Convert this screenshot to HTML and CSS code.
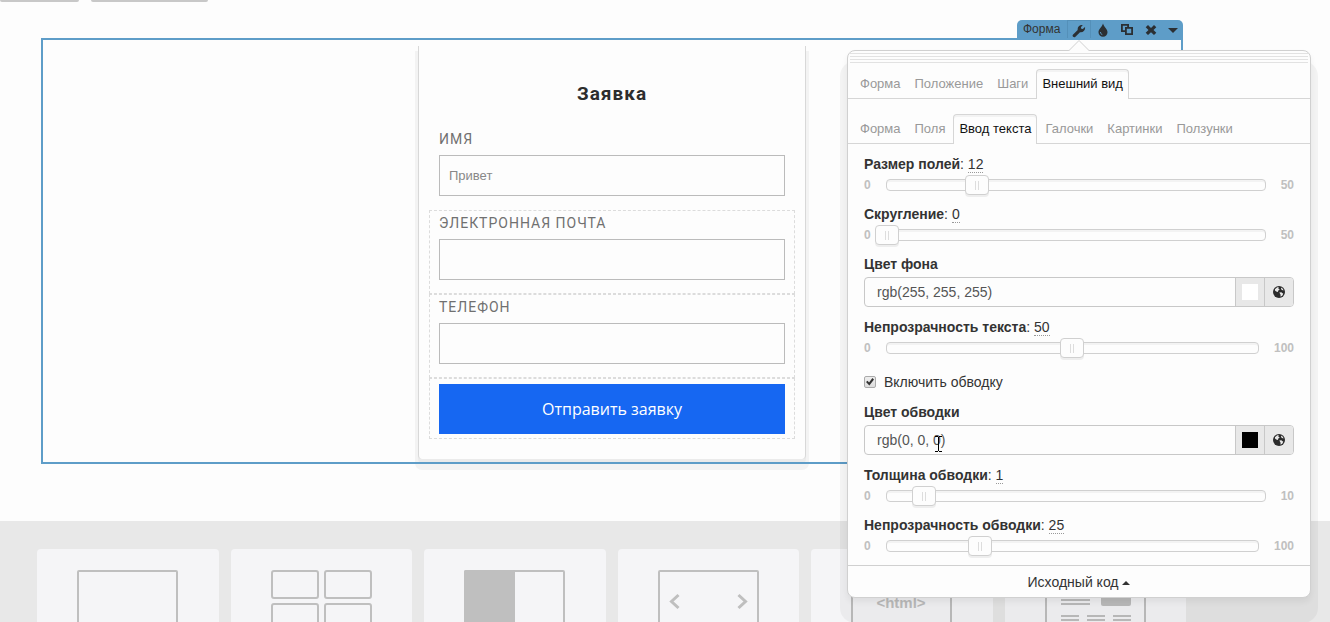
FILE: index.html
```html
<!DOCTYPE html>
<html lang="ru">
<head>
    <meta charset="UTF-8">
    <meta name="viewport" content="width=device-width, initial-scale=1.0">
    <title>Редактор формы</title>

    <link rel="stylesheet" href="styles.css">
</head>
<body>

    <div class="top-tabs">
        <div class="top-tab"></div>
        <div class="top-tab top-tab-wide"></div>
    </div>

    <!-- Edited block -->
    <main class="stage">
        <div class="toolbar">
            <span class="toolbar-title">Форма</span>
            <button type="button" class="tool active" aria-label="Настройки">
                <svg width="14" height="14" viewBox="0 0 14 14"><path d="M.9 10.800 5.700 6C5.200 3 7.500.5 10.800 1L8.900 3.200 9.300 4.700 10.800 5.100 13 3.100C13.600 6.200 11 8.800 8 8.200L3.200 13C1.900 14.200-.3 12 .9 10.800z"/></svg>
            </button>
            <button type="button" class="tool" aria-label="Цвет">
                <svg width="14" height="14" viewBox="0 0 14 14"><path d="M7 0.500C8 4 11.500 6 11.500 9.200A4.500 4.500 0 0 1 2.500 9.200C2.500 6 6 4 7 0.500z"/><path class="tool-gloss" d="M4.500 9c0 1.500.7 2.200 1.800 2.600"/></svg>
            </button>
            <button type="button" class="tool" aria-label="Копировать">
                <svg width="14" height="14" viewBox="0 0 14 14"><path fill-rule="evenodd" d="M1 1h8v3h4v8H5V9H1zM2.800 2.800v4.400H5V4h2.200V2.800zM6.800 5.800v4.400h4.400V5.800z"/></svg>
            </button>
            <button type="button" class="tool" aria-label="Удалить">
                <svg width="14" height="14" viewBox="0 0 14 14"><path d="M4 2 7 5 10 2 12.300 4.300 9.500 7 12.300 9.700 10 12 7 9.200 4 12 1.700 9.700 4.500 7 1.700 4.300z"/></svg>
            </button>
            <button type="button" class="tool tool-last" aria-label="Ещё">
                <svg width="10" height="14" viewBox="0 0 10 14"><path d="M0 5h10L5 10z"/></svg>
            </button>
        </div>

        <div class="frame">
            <form class="order">
                <h1>Заявка</h1>
                <div class="cell cell-plain">
                    <label for="name">ИМЯ</label>
                    <input type="text" id="name" placeholder="Привет">
                </div>
                <div class="cell">
                    <label for="email">ЭЛЕКТРОННАЯ ПОЧТА</label>
                    <input type="text" id="email">
                </div>
                <div class="cell">
                    <label for="phone">ТЕЛЕФОН</label>
                    <input type="text" id="phone">
                </div>
                <div class="cell cell-submit">
                    <button type="button">Отправить заявку</button>
                </div>
            </form>
        </div>
    </main>

    <!-- Widget library -->
    <section class="library">
        <button type="button" class="widget" aria-label="Блок">
            <svg width="101" height="80" viewBox="0 0 101 80"><rect x="1" y="1" width="99" height="78" rx="1"/></svg>
        </button>
        <button type="button" class="widget" aria-label="Сетка">
            <svg width="101" height="80" viewBox="0 0 101 80"><rect x="1" y="1" width="46" height="27" rx="2"/><rect x="54" y="1" width="46" height="27" rx="2"/><rect x="1" y="34" width="46" height="27" rx="2"/><rect x="54" y="34" width="46" height="27" rx="2"/></svg>
        </button>
        <button type="button" class="widget" aria-label="Колонки">
            <svg width="101" height="80" viewBox="0 0 101 80"><rect x="1" y="1" width="99" height="78" rx="1"/><rect class="solid" x="0" y="0" width="51" height="80" rx="2"/></svg>
        </button>
        <button type="button" class="widget" aria-label="Слайдер">
            <svg width="101" height="80" viewBox="0 0 101 80"><rect x="1" y="1" width="99" height="78" rx="1"/><path class="arrow" d="M20.500 25 13.500 31.500 20.500 38M80.500 25 87.500 31.500 80.500 38"/></svg>
        </button>
        <button type="button" class="widget" aria-label="HTML">
            <svg width="101" height="80" viewBox="0 0 101 80"><rect x="1" y="1" width="99" height="78" rx="1"/><text x="50" y="38" text-anchor="middle">&lt;html&gt;</text></svg>
        </button>
        <button type="button" class="widget" aria-label="Статья">
            <svg width="101" height="80" viewBox="0 0 101 80"><rect x="1" y="1" width="99" height="78" rx="1"/><path d="M16 30h29M16 34h29M16 46h18M42 46h18M68 46h18M16 50h18M42 50h18M68 50h18"/><rect class="solid" x="56" y="16" width="30" height="20" rx="2"/></svg>
        </button>
    </section>

    <!-- Settings popover -->
    <aside class="panel">
        <svg class="panel-arrow" width="22" height="11" viewBox="0 0 22 11"><path d="M0.500 11 11 0.500 21.500 11"/></svg>
        <div class="grip"></div>

        <nav class="tabs">
            <a href="#">Форма</a>
            <a href="#">Положение</a>
            <a href="#">Шаги</a>
            <a href="#" class="active">Внешний вид</a>
        </nav>
        <nav class="tabs">
            <a href="#">Форма</a>
            <a href="#">Поля</a>
            <a href="#" class="active">Ввод текста</a>
            <a href="#">Галочки</a>
            <a href="#">Картинки</a>
            <a href="#">Ползунки</a>
        </nav>

        <div class="settings">
            <div class="setting">
                <label for="size"><b>Размер полей</b>: <span class="value">12</span></label>
                <div class="slider">
                    <span>0</span>
                    <div class="track"><input type="range" id="size" min="0" max="50" value="12"></div>
                    <span>50</span>
                </div>
            </div>

            <div class="setting">
                <label for="radius"><b>Скругление</b>: <span class="value">0</span></label>
                <div class="slider">
                    <span>0</span>
                    <div class="track"><input type="range" id="radius" min="0" max="50" value="0"></div>
                    <span>50</span>
                </div>
            </div>

            <div class="setting">
                <label for="bg"><b>Цвет фона</b></label>
                <div class="color">
                    <input type="text" id="bg" value="rgb(255, 255, 255)">
                    <button type="button" aria-label="Выбрать цвет"><span class="swatch"></span></button>
                    <button type="button" aria-label="Общий цвет">
                        <svg width="12" height="12" viewBox="0 0 12 12"><circle cx="6" cy="6" r="6"/><path class="land" d="M2 3.200 4.200 1.300 6 1.400 5.300 2.800 6.800 3.600 5.300 4.600 4.900 6 3.200 5.500 2 4.500zM6.300 6.600 8.300 6.300 10.300 7.700 9.400 9.600 7.600 10.700 7.500 8.600zM8.300 1.600 10 3 10.500 4.500 9 4 8 3z"/></svg>
                    </button>
                </div>
            </div>

            <div class="setting">
                <label for="text-opacity"><b>Непрозрачность текста</b>: <span class="value">50</span></label>
                <div class="slider">
                    <span>0</span>
                    <div class="track"><input type="range" id="text-opacity" min="0" max="100" value="50"></div>
                    <span>100</span>
                </div>
            </div>

            <div class="check">
                <input type="checkbox" id="stroke" checked>
                <label for="stroke">Включить обводку</label>
            </div>

            <div class="setting">
                <label for="stroke-color"><b>Цвет обводки</b></label>
                <div class="color">
                    <input type="text" id="stroke-color" value="rgb(0, 0, 0)">
                    <button type="button" aria-label="Выбрать цвет"><span class="swatch swatch-black"></span></button>
                    <button type="button" aria-label="Общий цвет">
                        <svg width="12" height="12" viewBox="0 0 12 12"><circle cx="6" cy="6" r="6"/><path class="land" d="M2 3.200 4.200 1.300 6 1.400 5.300 2.800 6.800 3.600 5.300 4.600 4.900 6 3.200 5.500 2 4.500zM6.300 6.600 8.300 6.300 10.300 7.700 9.400 9.600 7.600 10.700 7.500 8.600zM8.300 1.600 10 3 10.500 4.500 9 4 8 3z"/></svg>
                    </button>
                    <svg class="cursor" width="7" height="16" viewBox="0 0 7 16"><path d="M0 .5h3M4 .5h3M3.500 1v14M0 15.500h3M4 15.500h3"/></svg>
                </div>
            </div>

            <div class="setting">
                <label for="stroke-width"><b>Толщина обводки</b>: <span class="value">1</span></label>
                <div class="slider">
                    <span>0</span>
                    <div class="track"><input type="range" id="stroke-width" min="0" max="10" value="1"></div>
                    <span>10</span>
                </div>
            </div>

            <div class="setting">
                <label for="stroke-opacity"><b>Непрозрачность обводки</b>: <span class="value">25</span></label>
                <div class="slider">
                    <span>0</span>
                    <div class="track"><input type="range" id="stroke-opacity" min="0" max="100" value="25"></div>
                    <span>100</span>
                </div>
            </div>
        </div>

        <button type="button" class="source">Исходный код <svg width="8" height="4" viewBox="0 0 8 4"><path d="M0 4h8L4 0z"/></svg></button>
    </aside>

</body>
</html>
```

FILE: styles.css
```css
* {
    box-sizing: border-box;
}

body {
    display: flex;
    flex-direction: column;
    position: relative;
    height: 100vh;
    margin: 0;
    overflow: hidden;
    background-color: #fdfdfd;
    color: #333;
    font-family: "Liberation Sans", Arial, sans-serif;
    font-size: 14px;
    line-height: 20px;
}

button, input {
    margin: 0;
    font-family: inherit;
    font-size: inherit;
    color: inherit;
}

button {
    padding: 0;
    border: 0;
    background: none;
}

/* Tabs cut off by the top edge */
.top-tabs {
    display: flex;
    gap: 12px;
}

.top-tab {
    width: 79px;
    height: 2px;
    background-color: #c8c8c8;
    border-radius: 0 0 2px 2px;
}

.top-tab-wide {
    width: 117px;
}

/* Edited block */
.stage {
    display: flex;
    flex-direction: column;
    padding: 18px 147px 57px 41px;
}

.toolbar {
    display: flex;
    align-self: flex-end;
    width: 166px;
    height: 18px;
    padding-left: 6px;
    background-color: #5e9dc8;
    border-radius: 5px 5px 0 0;
}

.toolbar-title {
    flex: 1;
    font-size: 12px;
    line-height: 18px;
}

.tool {
    display: flex;
    align-items: center;
    justify-content: center;
    width: 24px;
    height: 20px;
}

.tool.active {
    border: 1px solid #5490b9;
    border-bottom: 0;
}

.tool-last {
    width: 20px;
}

.tool svg {
    fill: #2b2f33;
}

.tool .tool-gloss {
    fill: none;
    stroke: #5e9dc8;
}

.frame {
    position: relative;
    padding: 8px 2px 5px;
}

.frame::after {
    content: "";
    position: absolute;
    inset: 0;
    border: 2px solid #5e9dc8;
    pointer-events: none;
}

.order {
    max-width: 388px;
    margin: 0 auto;
    padding: 0 10px 20px;
    background-color: #fdfdfd;
    border: 1px solid #d8d8d8;
    border-width: 0 1px;
    border-radius: 0 0 4px 4px;
    box-shadow: 0 4px 0 #ebebeb, 0 8px 0 3px #f3f3f3;
}

.order h1 {
    margin: 0;
    padding: 34px 0 18px;
    font-family: Roboto, sans-serif;
    font-size: 19px;
    line-height: 28px;
    letter-spacing: 1px;
    text-align: center;
    color: #2d2d2d;
}

.cell {
    padding: 3px 9px 13px;
    border: 1px dashed #dcdcdc;
}

.cell-plain {
    border-color: transparent;
}

.cell-submit {
    padding: 5px 9px 4px;
}

.cell label {
    display: block;
    margin-bottom: 7px;
    font-family: Roboto, sans-serif;
    font-size: 14px;
    line-height: 18px;
    letter-spacing: 1px;
    color: #707070;
}

.cell input {
    display: block;
    width: 100%;
    height: 41px;
    padding: 0 9px;
    background-color: #fdfdfd;
    border: 1px solid #bbb;
    font-size: 13px;
}

.cell input::placeholder {
    color: #888;
}

.cell button {
    width: 100%;
    height: 50px;
    background-color: #1667f2;
    color: #fff;
    font-family: "Open Sans", sans-serif;
    font-size: 16px;
}

/* Widget library */
.library {
    display: grid;
    flex: 1;
    grid-template-columns: repeat(6, 1fr);
    align-items: start;
    gap: 12px;
    padding: 28px 144px 28px 37px;
    overflow: hidden;
    background-color: #e8e8e8;
}

.widget {
    display: flex;
    justify-content: center;
    padding: 21px 0;
    background-color: #f5f5f7;
    border-radius: 4px;
}

.widget svg {
    fill: none;
    stroke: #bfbfbf;
    stroke-width: 2;
}

.widget .arrow {
    stroke-width: 3;
}

.widget .solid,
.widget text {
    fill: #bfbfbf;
    stroke: none;
}

.widget text {
    font-size: 15px;
    font-weight: bold;
}

/* Settings popover */
.panel {
    position: absolute;
    top: 50px;
    right: 19px;
    width: 464px;
    background-color: #fdfdfd;
    border: 1px solid #d0d0d0;
    border-radius: 8px;
    box-shadow: 0 4px 6px rgba(0, 0, 0, .06), 0 18px 0 7px rgba(0, 0, 0, .04);
}

.panel-arrow {
    position: absolute;
    top: -11px;
    left: 220px;
    fill: #fdfdfd;
    stroke: #d0d0d0;
}

.grip {
    height: 10px;
    margin: 2px 2px 6px;
    background: repeating-linear-gradient(#e2e2e2 0 1px, transparent 1px 3px);
}

.tabs {
    display: flex;
    gap: 2px;
    height: 30px;
    margin-bottom: 15px;
    padding: 0 6px;
    border-bottom: 1px solid #d6d6d6;
}

.tabs a {
    height: 30px;
    padding: 0 5px;
    border: 1px solid transparent;
    border-bottom: 0;
    border-radius: 4px 4px 0 0;
    font-size: 13px;
    line-height: 28px;
    color: #999;
    text-decoration: none;
}

.tabs a.active {
    background-color: #fdfdfd;
    border-color: #d6d6d6;
    box-shadow: inset 0 2px 0 #f3f3f3;
    color: #111;
}

.settings {
    padding: 0 16px;
    margin-top: -5px;
}

.setting label {
    display: block;
}

.value {
    border-bottom: 1px dotted #999;
}

.slider {
    display: flex;
    align-items: center;
    gap: 15px;
    height: 22px;
    margin-bottom: 8px;
    font-size: 12px;
    font-weight: bold;
    color: #c0c0c0;
}

.track {
    display: flex;
    flex: 1;
    align-items: center;
    height: 12px;
    border: 1px solid #d0d0d0;
    border-radius: 4px;
    box-shadow: inset 0 2px 0 #f3f3f3;
}

.track input {
    flex: 1;
    height: 22px;
    margin: 0 -12px;
    background: none;
    appearance: none;
}

.track input::-webkit-slider-thumb {
    width: 24px;
    height: 20px;
    border: 1px solid #d0d0d0;
    border-radius: 4px;
    background:
        linear-gradient(#ddd, #ddd) 9px 5px / 1px 9px no-repeat,
        linear-gradient(#ddd, #ddd) 12px 5px / 1px 9px no-repeat,
        #fdfdfd;
    box-shadow: 0 2px 0 rgba(0, 0, 0, .06);
    appearance: none;
}

.color {
    display: flex;
    position: relative;
    height: 30px;
    margin: 3px 0 10px;
    border: 1px solid #c8c8c8;
    border-radius: 4px;
    overflow: hidden;
}

.color input {
    flex: 1;
    min-width: 0;
    padding: 0 12px;
    border: 0;
    background: none;
    color: #555;
}

.color button {
    display: flex;
    align-items: center;
    justify-content: center;
    width: 29px;
    background-color: #e8e8e8;
    border-left: 1px solid #c8c8c8;
}

.color button svg {
    fill: #2b2b2b;
}

.color button .land {
    fill: #e8e8e8;
}

.swatch {
    width: 16px;
    height: 16px;
    background-color: #fff;
}

.swatch-black {
    background-color: #000;
}

.cursor {
    position: absolute;
    top: 10px;
    left: 70px;
    fill: none;
    stroke: #000;
}

.check {
    display: flex;
    align-items: center;
    gap: 8px;
    margin: 13px 0 10px;
}

.check input {
    position: relative;
    width: 12px;
    height: 12px;
    border: 1px solid #aaa;
    border-radius: 2px;
    background: linear-gradient(#eee, #ddd);
    appearance: none;
}

.check input:checked::after {
    content: "";
    position: absolute;
    inset: 1px;
    background-color: #333;
    clip-path: polygon(0 50%, 20% 35%, 38% 55%, 80% 0, 100% 18%, 42% 95%);
}

.source {
    display: block;
    width: 100%;
    height: 32px;
    border-top: 1px solid #d0d0d0;
}

.source svg {
    vertical-align: middle;
    fill: #333;
}
```
